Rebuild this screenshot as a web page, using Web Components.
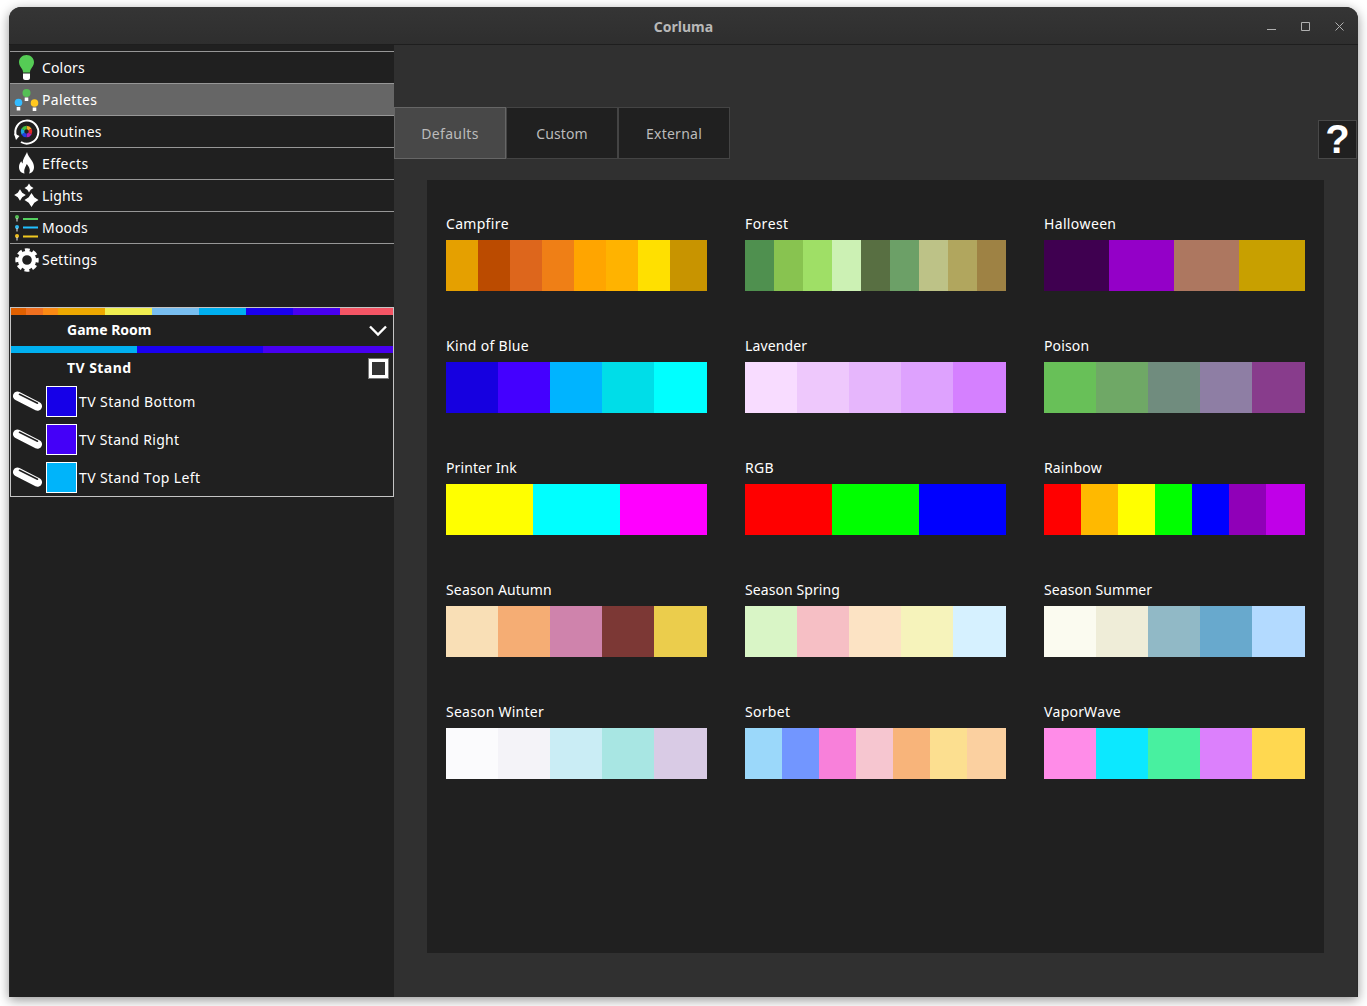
<!DOCTYPE html>
<html lang="en">
<head>
<meta charset="utf-8">
<title>Corluma</title>
<style>
html,body{margin:0;padding:0;height:1006px;overflow:hidden;background:#fff}
body{font-family:"Noto Sans","Open Sans",sans-serif;font-size:14px;color:#fff}
</style>
</head>
<body>
<app-window heading="Corluma">
  <side-bar slot="side">
    <nav-item label="Colors" ls=".15"><svg viewBox="0 0 32 32" width="32" height="32"><path d="M16.500 3C12 3 9 6.300 9 10.300c0 3 1.800 4.700 3 6.700.6 1 1 2 1 3.500h7c0-1.500.4-2.500 1-3.500 1.200-2 3-3.700 3-6.700C24 6.300 21 3 16.500 3z" fill="#55cc55"/><path d="M13 21.500h7v4.500c0 1.200-1 2-2 2h-3c-1 0-2-.8-2-2z" fill="#fff"/></svg></nav-item>
    <nav-item label="Palettes" ls=".35" active><svg viewBox="0 0 32 32" width="32" height="32"><circle cx="16.500" cy="9" r="4" fill="#55c055"/><path d="M14.700 13.500h3.600v3.500h-3.600z" fill="#fff"/><circle cx="8.500" cy="18.500" r="3.800" fill="#33bbff"/><path d="M6.700 23h3.600v3.500H6.700z" fill="#fff"/><circle cx="24.500" cy="19" r="3.800" fill="#ffc820"/><path d="M22.700 23.500h3.600V27h-3.600z" fill="#fff"/></svg></nav-item>
    <nav-item label="Routines" ls=".25"><svg viewBox="0 0 32 32" width="32" height="32"><path d="M6.200 20.500A11.500 11.500 0 1 1 11 26" fill="none" stroke="#fff" stroke-width="2"/><path d="M4 17.500l5.500 2.500-3.500 4z" fill="#fff"/><g fill="none" stroke-width="3.600"><path d="M16.500 11.500a4 4 0 0 1 3.460 2" stroke="#f0a820"/><path d="M19.960 13.500a4 4 0 0 1 0 4" stroke="#e02828"/><path d="M19.960 17.500a4 4 0 0 1-3.460 2" stroke="#b020b0"/><path d="M16.500 19.500a4 4 0 0 1-3.460-2" stroke="#2040e0"/><path d="M13.040 17.500a4 4 0 0 1 0-4" stroke="#20a8e0"/><path d="M13.040 13.500a4 4 0 0 1 3.460-2" stroke="#40c040"/></g></svg></nav-item>
    <nav-item label="Effects" ls=".4"><svg viewBox="0 0 32 32" width="32" height="32"><path d="M17 4c.5 3 2.500 5 4 7.500 1.700 2.500 3 4.500 3 7.500 0 3.500-2 6-5 6.500 1.500-2.500 1-5.500-2.200-9.500-1.300 3-3.300 5.500-2.300 9.500C11 25 9 22.500 9 19c0-2.500 1-4 2.200-5.700.4 1 .8 1.700 1.500 2.200C12.500 11 15.500 8 17 4z" fill="#fff"/></svg></nav-item>
    <nav-item label="Lights" ls=".15"><svg viewBox="0 0 32 32" width="32" height="32" fill="#fff"><path d="M19 3.500l1.700 2.800 2.800 1.700-2.800 1.700L19 12.500l-1.700-2.800L14.500 8l2.800-1.700z"/><path d="M10 9.200l2.200 3.600 3.600 2.200-3.600 2.200-2.200 3.600-2.200-3.600L4.200 15l3.600-2.200z"/><path d="M21.500 13l2.800 4.200 4.200 2.800-4.200 2.800-2.800 4.200-2.800-4.200-4.200-2.800 4.200-2.800z"/></svg></nav-item>
    <nav-item label="Moods" ls=".2"><svg viewBox="0 0 32 32" width="32" height="32"><circle cx="7" cy="5" r="2" fill="#55c055"/><path d="M6.500 6h1v3.500h-1z" fill="#eee"/><circle cx="7" cy="15" r="2" fill="#30b8f0"/><path d="M6.500 16h1v3.500h-1z" fill="#eee"/><circle cx="7" cy="24" r="2" fill="#f0c020"/><path d="M6.500 25h1v3.500h-1z" fill="#eee"/><path d="M13 6h15v2H13z" fill="#55d060"/><path d="M13 14.500h15v2H13z" fill="#20c0ff"/><path d="M13 23.500h15v2H13z" fill="#f0c820"/></svg></nav-item>
    <nav-item label="Settings" ls=".25"><svg viewBox="0 0 32 32" width="32" height="32"><circle cx="17" cy="16" r="7" fill="none" stroke="#fff" stroke-width="4.400"/><circle cx="17" cy="16" r="10" fill="none" stroke="#fff" stroke-width="3.400" stroke-dasharray="4.800 3.054" stroke-dashoffset="2.400"/></svg></nav-item>
    <light-group name="Game Room" top="#e06000:15,#f07020:17,#fb8a14:15,#eda800:47,#f0ee50:47,#78bef0:47,#00b0f0:47,#1a00f0:47,#4800f0:47,#f55565:53" bar="#00b0f0:126,#1a00f0:126,#4800f0:130">
      <light-room name="TV Stand"></light-room>
      <light-row name="TV Stand Bottom" ls=".42" color="#1600e8"></light-row>
      <light-row name="TV Stand Right" ls=".32" color="#4400f8"></light-row>
      <light-row name="TV Stand Top Left" ls=".38" color="#00b4fa"></light-row>
    </light-group>
  </side-bar>
  <palette-page>
    <tab-button slot="tabs" ls=".35" active>Defaults</tab-button>
    <tab-button slot="tabs" ls=".1">Custom</tab-button>
    <tab-button slot="tabs" ls=".25">External</tab-button>
    <help-button slot="help"></help-button>
    <palette-card name="Campfire" ls=".3" colors="#e5a000 #bb4b00 #dd661c #ef7f16 #ffa500 #ffb300 #ffe000 #c89400"></palette-card>
    <palette-card name="Forest" ls=".4" colors="#4f904f #88c350 #9fdf66 #ccf1b4 #586f42 #6ca067 #bdc287 #b1a65e #9e8244"></palette-card>
    <palette-card name="Halloween" ls=".33" colors="#3f0050 #9400c8 #ad7760 #c8a000"></palette-card>
    <palette-card name="Kind of Blue" ls=".3" colors="#1600e0 #4400ff #00b4ff #00dde8 #00ffff"></palette-card>
    <palette-card name="Lavender" ls=".12" colors="#f8dcff #eec8fc #e6b6fc #dea2fe #d580ff"></palette-card>
    <palette-card name="Poison" ls=".15" colors="#68c058 #6fa866 #708c7e #8e7ea4 #883c8c"></palette-card>
    <palette-card name="Printer Ink" ls=".1" colors="#ffff00 #00ffff #ff00ff"></palette-card>
    <palette-card name="RGB" ls=".3" colors="#ff0000 #00ff00 #0000ff"></palette-card>
    <palette-card name="Rainbow" ls=".15" colors="#ff0000 #ffb900 #ffff00 #00ff00 #0000ff #9000b8 #c000e8"></palette-card>
    <palette-card name="Season Autumn" ls=".15" colors="#f9dfb6 #f5ad74 #cf83ac #7c3835 #ebcd4c"></palette-card>
    <palette-card name="Season Spring" ls=".08" colors="#d9f5c6 #f6bfc5 #fce3c4 #f6f3bb #d6f1ff"></palette-card>
    <palette-card name="Season Summer" ls=".08" colors="#fbfbf0 #efedd8 #91b9c6 #68a9cd #b3daff"></palette-card>
    <palette-card name="Season Winter" ls=".23" colors="#fbfbfd #f4f3f8 #caedf5 #a8e6e3 #d9cbe5"></palette-card>
    <palette-card name="Sorbet" ls=".3" colors="#9bd8fa #7296ff #f880da #f6c6d0 #f8b47a #fcdf90 #fbd0a0"></palette-card>
    <palette-card name="VaporWave" ls=".2" colors="#ff8ce8 #0ce8ff #48f0a0 #dc80fc #ffd850"></palette-card>
  </palette-page>
</app-window>
<script>
const FONT = '"Noto Sans","Open Sans",sans-serif';
function def(name, css, html, init){
  customElements.define(name, class extends HTMLElement{
    constructor(){
      super();
      const r = this.attachShadow({mode:'open'});
      r.innerHTML = '<style>'+css+'</style>'+(typeof html==='function'?html(this):html);
      const ls = this.getAttribute('ls');
      if(ls) this.style.letterSpacing = ls+'px';
      if(init) init(this,r);
    }
  });
}
const segs = s => s.split(',').map(p=>{const [c,w]=p.split(':');return `<i style="background:${c};width:${w}px"></i>`}).join('');

def('app-window',`
:host{display:flex;flex-direction:column;box-sizing:border-box;width:1349px;height:990px;margin:7px 0 0 9px;background:#303030;border-radius:12px 12px 0 0;box-shadow:0 3px 12px rgba(0,0,0,.42);overflow:hidden;font:14px ${FONT};color:#fff}
header{flex:none;box-sizing:border-box;height:38px;display:grid;grid-template-columns:1fr auto 1fr;align-items:center;background:linear-gradient(#353535,#2e2e2e);border-bottom:1px solid #1e1e1e}
h1{margin:0;font-size:14px;font-weight:700;color:#b8b8b8;grid-column:2;line-height:38px;padding-top:1px}
.ctl{grid-column:3;justify-self:end;display:flex;gap:25px;padding-right:14px;align-items:center}
svg{display:block;stroke:#b0b0b0;fill:none}
main{flex:1;display:flex;min-height:0;padding:0 1px 0 1px;background:#2a2a2a}
`,el=>`<header><h1>${el.getAttribute('heading')}</h1><div class="ctl">
<svg width="9" height="9" viewBox="0 0 9 9"><path d="M0 7.500h9"/></svg>
<svg width="9" height="9" viewBox="0 0 9 9"><path d="M.5.500h8v8h-8z"/></svg>
<svg width="9" height="9" viewBox="0 0 9 9"><path d="M.5.500l8 8M8.500.500l-8 8"/></svg>
</div></header><main><slot name="side"></slot><slot></slot></main>`);

def('side-bar',`:host{display:flex;flex-direction:column;flex:none;width:384px;box-sizing:border-box;background:#202020;padding-top:6px}`,`<slot></slot>`);

def('nav-item',`
:host{display:flex;align-items:center;height:32px;box-sizing:border-box;border-top:1px solid #979797;background:#202020;color:#fff;font-size:14px;font-kerning:none}
:host([active]){background:#666}
.i{flex:none;width:32px;height:31px;display:flex;align-items:center;overflow:visible}
span{line-height:31px}
`,el=>`<div class="i"><slot></slot></div><span>${el.getAttribute('label')}</span>`);

def('light-group',`
:host{display:block;box-sizing:border-box;margin-top:32px;height:190px;border:1px solid #c4c4c4;background:#202020}
.bar{display:flex;height:7px}.bar i{display:block;flex:none}
.head{display:flex;align-items:center;height:31px;padding:0 6px 2px 56px;box-sizing:border-box;font-weight:700;justify-content:space-between;font-size:14px}
.head svg{margin-top:2px}
svg{display:block}
.list{display:block}
`,el=>`<div class="bar">${segs(el.getAttribute('top'))}</div>
<div class="head"><span>${el.getAttribute('name')}</span><svg width="18" height="12" viewBox="0 0 18 12"><path d="M1 1.500l8 8 8-8" fill="none" stroke="#fff" stroke-width="2.400"/></svg></div>
<div class="bar">${segs(el.getAttribute('bar'))}</div><div class="list"><slot></slot></div>`);

def('light-room',`
:host{display:flex;align-items:center;justify-content:space-between;height:33px;box-sizing:border-box;padding:0 4px 3px 56px;font-weight:700;font-size:14px;font-kerning:none}
span{letter-spacing:.45px;padding-bottom:2px}
.c{box-sizing:border-box;width:21px;height:21px;border:1px solid #777;box-shadow:inset 0 0 0 3px #fff;background:#333}
`,el=>`<span>${el.getAttribute('name')}</span><div class="c"></div>`);

def('light-row',`
:host{display:flex;align-items:center;height:31px;margin-bottom:7px;font-size:14px;font-kerning:none}
svg{display:block;flex:none;margin:0 3px 0 2px}
.s{flex:none;box-sizing:border-box;width:31px;height:31px;border:1px solid #fff;margin-right:2px}
`,el=>`<svg width="30" height="31" viewBox="0 0 30 31"><path d="M4.500 10.100l20 10.100" stroke="#fff" stroke-width="9" stroke-linecap="round" fill="none"/><path d="M6.500 8.300l18 8.900" stroke="#202020" stroke-width="1.600" stroke-linecap="round" fill="none"/></svg><div class="s" style="background:${el.getAttribute('color')}"></div><span>${el.getAttribute('name')}</span>`);

def('palette-page',`
:host{display:flex;flex-direction:column;flex:1;min-width:0;background:#303030;padding-top:62px;box-sizing:border-box}
.top{display:flex;align-items:flex-end;justify-content:space-between;height:52px;flex:none}
.tabs{display:flex}
.panel{box-sizing:border-box;margin:21px 33px 43px;height:773px;background:#202020;padding:34px 19px 0;display:grid;grid-template-columns:repeat(3,261px);column-gap:38px;row-gap:45px;align-content:start}
`,`<div class="top"><div class="tabs"><slot name="tabs"></slot></div><slot name="help"></slot></div><div class="panel"><slot></slot></div>`);

def('tab-button',`
:host{display:flex;align-items:center;justify-content:center;box-sizing:border-box;width:112px;height:52px;background:#202020;border:1px solid #444;color:#bbb;font-size:14px}
:host([active]){background:#484848;border-color:#666}
`,`<slot></slot>`);

def('help-button',`
:host{display:flex;align-items:center;justify-content:center;box-sizing:border-box;width:39px;height:39px;background:#202020;border:1px solid #484848;color:#fff;font:700 40px/37px "Liberation Sans",sans-serif}
`,`?`);

def('palette-card',`
:host{display:block;height:77px;font-size:14px;color:#fff;font-kerning:none}
.t{height:26px;line-height:20px}
.s{display:flex;height:51px;width:261px}
.s i{display:block;flex:none}
.s i:last-child{flex:1}
`,el=>{
  const c=el.getAttribute('colors').split(' '),w=Math.floor(261/c.length);
  return `<div class="t">${el.getAttribute('name')}</div><div class="s">${c.map(x=>`<i style="background:${x};width:${w}px"></i>`).join('')}</div>`;
});
</script>
</body>
</html>
